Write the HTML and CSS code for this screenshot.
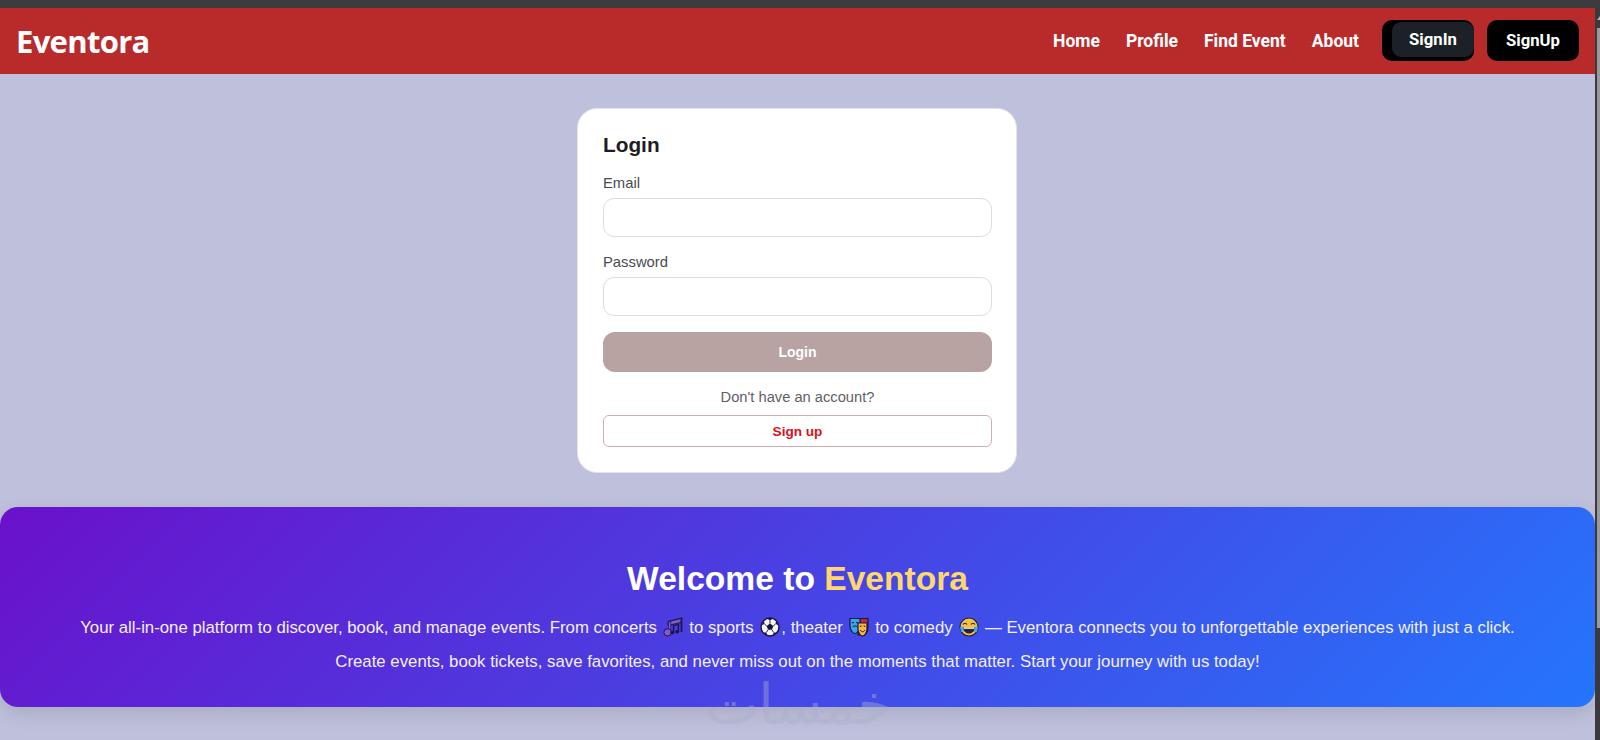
FILE: index.html
```html
<!DOCTYPE html>
<html lang="en">

<head>
    <meta charset="UTF-8">
    <meta name="viewport" content="width=device-width, initial-scale=1.0">
    <title>Eventora</title>
    <link rel="stylesheet" href="styles.css">
</head>

<body>
<div class="top-strip"></div>
<div class="window">
    <div class="app">
        <div class="navbar">
            <a class="brand" href="#">Eventora</a>
            <div class="nav-links">
                <a href="#">Home</a>
                <a href="#">Profile</a>
                <a href="#">Find Event</a>
                <a href="#">About</a>
            </div>
            <div class="nav-buttons">
                <a class="signin" href="#"><span>SignIn</span></a>
                <a class="signup" href="#">SignUp</a>
            </div>
        </div>

        <div class="login-wrap">
            <form class="login-card">
                <h2>Login</h2>
                <label>Email</label>
                <input type="email">
                <label>Password</label>
                <input type="password">
                <button class="login-btn" type="button">Login</button>
                <p class="no-account">Don't have an account?</p>
                <button class="signup-btn" type="button">Sign up</button>
            </form>
        </div>

        <div class="hero">
            <h1>Welcome to <span class="gold">Eventora</span></h1>
            <p>Your all-in-one platform to discover, book, and manage events. From concerts
                <svg class="emoji" viewBox="0 0 20 20">
                    <path d="M6.5 4.5 L18.5 1.5 V15" fill="none" stroke="#1c1450" stroke-width="1.8"/>
                    <path d="M5 4.5 L18 1.5 V5.5 L5 8.5 Z" fill="#7d5cc4" stroke="#1c1450"/>
                    <rect x="5.4" y="4.5" width="2.4" height="11" fill="#7d5cc4" stroke="#1c1450" stroke-width=".7"/>
                    <ellipse cx="4.6" cy="15.4" rx="3.8" ry="3.6" fill="#7d5cc4" stroke="#1c1450"/>
                    <path d="M10.6 15 V8.6 L15.4 7.6 V14.4" fill="none" stroke="#1c1450" stroke-width="1.5"/>
                    <ellipse cx="9.4" cy="15.6" rx="2" ry="1.8" fill="#1c1450"/>
                    <ellipse cx="14.2" cy="14.8" rx="2" ry="1.8" fill="#1c1450"/>
                </svg>
                to sports
                <svg class="emoji" viewBox="0 0 20 20">
                    <circle cx="10" cy="10" r="9" fill="#f4f4f4" stroke="#17133c" stroke-width="1.4"/>
                    <path d="M10 6.6 L13.3 9 L12 12.8 H8 L6.7 9 Z" fill="#17133c"/>
                    <path d="M7.4 1.8 L10 3.4 L12.6 1.8 L12 1 H8 Z M16 3.8 L15.6 7 L18.6 8.2 Z M4 3.8 L4.4 7 L1.4 8.2 Z M3.4 15.6 L6.4 15.4 L7 18.2 Z M16.6 15.6 L13.6 15.4 L13 18.2 Z" fill="#17133c"/>
                    <path d="M10 3.4 V6.6 M13.3 9 L15.6 7 M6.7 9 L4.4 7 M12 12.8 L13.6 15.4 M8 12.8 L6.4 15.4" stroke="#17133c" stroke-width=".9"/>
                </svg>, theater
                <svg class="emoji" viewBox="0 0 20 20">
                    <path d="M10 1.5 H19 V11 C19 15 16 18 15 18 H9 Z" fill="#c0263c" stroke="#1a1440" stroke-width="1.2"/>
                    <path d="M1 1.5 H11 V9 C11 13 8 16.5 6 16.5 C4 16.5 1 13 1 9 Z" fill="#35a6ea" stroke="#1a1440" stroke-width="1.2"/>
                    <path d="M2.8 6 L5 5.4 M7 5.4 L9.2 6 M3.6 10 C5 8.6 7 8.6 8.4 10" fill="none" stroke="#1a1440" stroke-width="1"/>
                    <path d="M9 6 H18 V12 C18 16 15.5 19 13.5 19 C11.5 19 9 16 9 12 Z" fill="#f5b93a" stroke="#1a1440" stroke-width="1.2"/>
                    <path d="M10.8 9.4 L12.6 9 M14.6 9 L16.4 9.4 M11.4 13 C12.6 15.4 14.6 15.4 15.8 13" fill="none" stroke="#1a1440" stroke-width="1"/>
                </svg>
                to comedy
                <svg class="emoji" viewBox="0 0 20 20">
                    <circle cx="10" cy="10" r="9" fill="#f7c23c" stroke="#1c1c40" stroke-width="1.2"/>
                    <path d="M4 7.5 C5 5.8 7 5.8 8 7.5 M12 7.5 C13 5.8 15 5.8 16 7.5" fill="none" stroke="#1c1c40" stroke-width="1.2"/>
                    <path d="M4.2 10.4 H15.8 C15.8 14 13.4 16.4 10 16.4 C6.6 16.4 4.2 14 4.2 10.4 Z" fill="#27203f"/>
                    <path d="M5 10.4 H15 V11.8 H5 Z" fill="#fff"/>
                    <path d="M1 10 L4.2 9.4 L5 14.6 L2 15 Z M19 10 L15.8 9.4 L15 14.6 L18 15 Z" fill="#4aa6e8"/>
                </svg>
                — Eventora connects you to unforgettable experiences with just a click.</p>
            <p>Create events, book tickets, save favorites, and never miss out on the moments that matter. Start your journey with us today!</p>
        </div>

        <div class="watermark" dir="rtl">خمسات</div>
    </div>

    <div class="scrollbar">
        <div class="scroll-track"></div>
        <div class="scroll-col">
            <div class="scroll-arrow"></div>
            <div class="scroll-thumb"></div>
        </div>
    </div>
</div>
</body>

</html>
```

FILE: styles.css
```css
html,
body {
    width: 100%;
    height: 100%;
    overflow: hidden;
    margin: 0;
    padding: 0;
}

body {
    background: #bfc1dc;
    font-family: "Liberation Sans", Arial, sans-serif;
}

a {
    text-decoration: none;
}

.top-strip {
    height: 8px;
    background: #3c3c3f;
}

.window {
    display: flex;
    height: 732px;
}

.app {
    flex: 1;
    min-width: 0;
    position: relative;
    overflow: hidden;
}

/* navbar */
.navbar {
    height: 66px;
    box-sizing: border-box;
    padding: 0 16px;
    display: flex;
    align-items: center;
    background: #b92b2b;
}

.brand {
    color: #fff;
    font-family: "Open Sans", sans-serif;
    font-size: 31px;
    font-weight: 700;
    letter-spacing: -0.7px;
    margin-right: auto;
}

.nav-links {
    display: flex;
    gap: 26px;
}

.nav-links a {
    color: #fff;
    font-family: Roboto, sans-serif;
    font-size: 17.5px;
    font-weight: 700;
}

.nav-buttons {
    display: flex;
    gap: 13px;
    margin: 0 0 1px 23px;
}

.signin,
.signup {
    height: 41px;
    width: 92px;
    box-sizing: border-box;
    display: flex;
    align-items: center;
    justify-content: center;
    background: #000;
    border-radius: 10px;
    color: #fff;
    font-family: Roboto, sans-serif;
    font-size: 16.7px;
    font-weight: 700;
}

.signin {
    padding: 2px 0 4px 10px;
    align-items: stretch;
}

.signin span {
    flex: 1;
    display: flex;
    align-items: center;
    justify-content: center;
    background: #1b2126;
    border-radius: 9px;
}

/* login card */
.login-wrap {
    padding: 34px 1px 0 0;
    display: flex;
    justify-content: center;
}

.login-card {
    width: 440px;
    height: 365px;
    box-sizing: border-box;
    padding: 24px 24px 25px 25px;
    display: flex;
    flex-direction: column;
    background: #fff;
    border: 1px solid #e3e3ee;
    border-radius: 20px;
}

.login-card h2 {
    margin: 0 0 17px;
    font-size: 20.8px;
    line-height: 24px;
    color: #1e1e22;
}

.login-card label {
    padding-top: 1px;
    font-size: 14.8px;
    line-height: 17px;
    color: #4a4a52;
    margin-bottom: 6px;
}

.login-card input {
    height: 39px;
    box-sizing: border-box;
    margin: 0 0 16px;
    border: 1px solid #dcdce2;
    border-radius: 11px;
    background: #fff;
    outline: none;
}

.login-card button {
    font-family: "Liberation Sans", Arial, sans-serif;
    font-weight: 700;
}

.login-btn {
    height: 40px;
    border: none;
    border-radius: 12px;
    background: #b8a2a2;
    color: #fff;
    font-size: 14px;
}

.no-account {
    margin: 17px 0 9px;
    text-align: center;
    font-size: 14.7px;
    line-height: 17px;
    color: #5f5f65;
}

.signup-btn {
    height: 32px;
    padding: 0;
    border: 1px solid #cdb0b6;
    border-radius: 6px;
    background: #fff;
    color: #dc0f1a;
    font-size: 13.6px;
}

/* welcome banner */
.hero {
    margin-top: 34px;
    height: 200px;
    box-sizing: border-box;
    padding-top: 52px;
    text-align: center;
    color: #f3efff;
    background: linear-gradient(135deg, #6a11cb, #2575fc);
    border-radius: 18px;
    box-shadow: 0 6px 20px rgba(0, 0, 0, 0.12);
}

.hero h1 {
    margin: 0 0 12px;
    font-size: 33.6px;
    line-height: 40px;
    color: #fff;
}

.hero .gold {
    color: #ffd76e;
}

.hero p {
    margin: 0;
    font-size: 16.8px;
    line-height: 34px;
}

.emoji {
    width: 20px;
    height: 20px;
    vertical-align: -4px;
    margin: 0 1.5px;
}

.watermark {
    position: absolute;
    left: 703px;
    top: 667px;
    width: 192px;
    text-align: center;
    font-family: "DejaVu Sans", sans-serif;
    font-size: 56px;
    line-height: 60px;
    color: rgba(170, 175, 205, 0.42);
}

/* browser scrollbar */
.scrollbar {
    width: 5px;
    display: flex;
    background: #3a3a3e;
}

.scroll-track {
    width: 2px;
}

.scroll-col {
    width: 3px;
    padding-top: 8px;
}

.scroll-arrow {
    height: 0;
    margin-bottom: 8px;
    border-left: 3px solid transparent;
    border-bottom: 4px solid #b0b0b2;
}

.scroll-thumb {
    height: 600px;
    background: #9a9a9c;
}
```
